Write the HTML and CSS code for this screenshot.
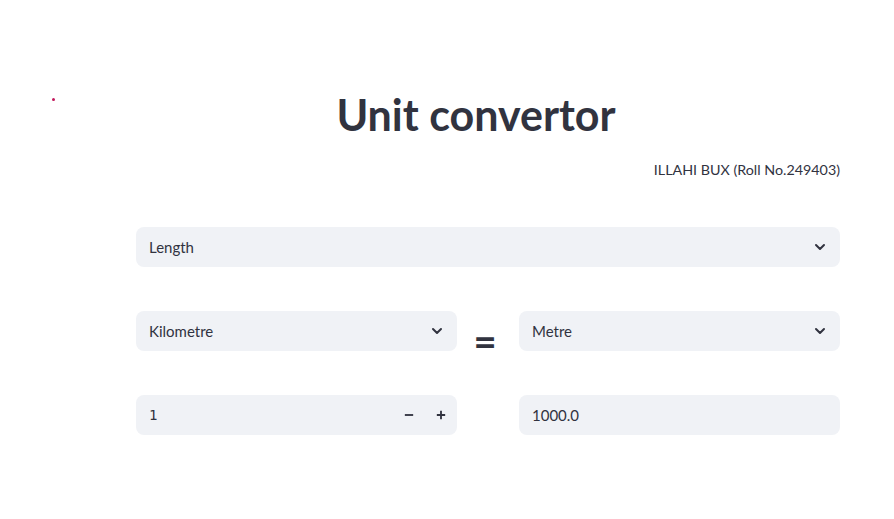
FILE: index.html
```html
<!DOCTYPE html>
<html>
<head>
<meta charset="utf-8">
<link rel="stylesheet" href="styles.css">
</head>
<body>
<span class="dot"></span>
<main class="main">
  <h1 class="title">Unit convertor</h1>
  <p class="author">ILLAHI BUX (Roll No.249403)</p>
  <div class="field select wide">
    <span class="value">Length</span>
    <svg class="chev" viewBox="0 0 24 24"><path d="M6 9l6 6 6-6"/></svg>
  </div>
  <div class="row">
    <div class="field select">
      <span class="value">Kilometre</span>
      <svg class="chev" viewBox="0 0 24 24"><path d="M6 9l6 6 6-6"/></svg>
    </div>
    <div class="eq">=</div>
    <div class="field select">
      <span class="value">Metre</span>
      <svg class="chev" viewBox="0 0 24 24"><path d="M6 9l6 6 6-6"/></svg>
    </div>
  </div>
  <div class="row">
    <div class="field number">
      <span class="value mono">1</span>
      <div class="steps">
        <svg class="step" viewBox="0 0 12 12"><path d="M1 6h10"/></svg>
        <svg class="step" viewBox="0 0 12 12"><path d="M1 6h10M6 1v10"/></svg>
      </div>
    </div>
    <div class="spacer"></div>
    <div class="field">
      <span class="value">1000.0</span>
    </div>
  </div>
</main>
</body>
</html>
```
FILE: styles.css
```css
html, body {
  margin: 0;
  background: #ffffff;
  color: #31333f;
  font-family: Lato, "Open Sans", sans-serif;
}
.dot {
  position: absolute;
  left: 52px;
  top: 98px;
  width: 3px;
  height: 3px;
  border-radius: 50%;
  background: #c2185b;
}
.main {
  width: 704px;
  padding: 78px 0 0 136px;
}
.title {
  margin: 0;
  padding-right: 24px;
  font-size: 43px;
  line-height: 74px;
  font-weight: 700;
  text-align: center;
}
.author {
  margin: 6px 0 0;
  font-size: 14.3px;
  line-height: 24px;
  text-align: right;
}
.field {
  box-sizing: border-box;
  height: 40px;
  background: #f0f2f6;
  border-radius: 8px;
  display: flex;
  align-items: center;
  justify-content: space-between;
  padding: 0 13px;
  font-size: 15px;
}
.wide {
  margin-top: 45px;
}
.row {
  margin-top: 44px;
  display: grid;
  grid-template-columns: 321px 1fr 321px;
  grid-template-rows: 40px;
}
.chev {
  width: 16px;
  height: 16px;
  fill: none;
  stroke: #31333f;
  stroke-width: 3;
  stroke-linecap: round;
  stroke-linejoin: round;
  margin-right: -1px;
}
.eq {
  font-size: 40px;
  font-weight: 700;
  text-align: center;
  line-height: 40px;
  padding: 10px 6px 0 0;
}
.mono {
  font-family: "DejaVu Sans Mono", monospace;
  font-size: 14px;
}
.number {
  padding-right: 11px;
}
.steps {
  display: flex;
  gap: 22px;
}
.step {
  width: 10px;
  height: 10px;
  fill: none;
  stroke: #31333f;
  stroke-width: 2.2;
}
```
